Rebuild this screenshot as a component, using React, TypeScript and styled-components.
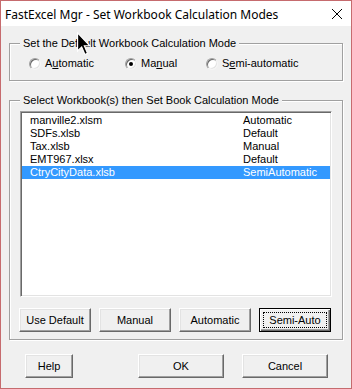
import React from "react";
import styled, { createGlobalStyle } from "styled-components";

const Global = createGlobalStyle`
  html, body { margin: 0; padding: 0; background: #f0f0f0; }
  body { font-family: "Liberation Sans", Arial, sans-serif; font-size: 11px; color: #000; }
  * { box-sizing: border-box; }
`;

const Window = styled.div`
  position: relative;
  width: 352px;
  height: 389px;
  border: 1px solid #c66b6e;
  background: #f0f0f0;
  display: flex;
  flex-direction: column;
  overflow: hidden;
`;

const TitleBar = styled.div`
  height: 25px;
  flex: none;
  background: #fff;
  display: flex;
  align-items: center;
  justify-content: space-between;
  padding: 1px 8px 0 4px;
  font-family: "Noto Sans", "Liberation Sans", sans-serif;
  font-size: 12px;
  color: #000;
`;

const Title = styled.span`
  white-space: nowrap;
`;

const CloseIcon = styled.svg`
  width: 12px;
  height: 12px;
  display: block;
`;

const Body = styled.div`
  padding: 17px 7px 0 8px;
  display: flex;
  flex-direction: column;
`;

const Group = styled.div<{ $mt?: number }>`
  position: relative;
  border: 1px solid #a0a0a0;
  box-shadow: inset 1px 1px 0 #fff, 1px 1px 0 #fff;
  margin-top: ${(p) => p.$mt ?? 0}px;
  margin-right: 1px;
`;

const Legend = styled.span`
  position: absolute;
  top: -7px;
  left: 10px;
  padding: 0 3px;
  height: 13px;
  line-height: 13px;
  background: #f0f0f0;
  white-space: nowrap;
`;

const RadioRow = styled.div`
  display: flex;
  align-items: center;
  height: 13px;
  margin: 13px 0 10px 19px;
`;

const RadioItem = styled.label<{ $w: number }>`
  display: flex;
  align-items: center;
  gap: 4px;
  width: ${(p) => p.$w}px;
  line-height: 13px;
  white-space: nowrap;
`;

const RadioCircle = styled.span<{ $checked?: boolean }>`
  position: relative;
  width: 12px;
  height: 12px;
  border-radius: 50%;
  background: #fff;
  border: 1px solid;
  border-color: #a0a0a0 #f4f4f4 #f4f4f4 #a0a0a0;
  box-shadow: inset 1px 1px 0 #6a6a6a, inset -1px -1px 0 #e3e3e3;
  flex: none;
  &::after {
    content: "";
    display: ${(p) => (p.$checked ? "block" : "none")};
    position: absolute;
    left: 3px;
    top: 3px;
    width: 4px;
    height: 4px;
    border-radius: 50%;
    background: #000;
  }
`;

const Key = styled.span`
  text-decoration: underline;
  text-underline-offset: 1px;
`;

const ListArea = styled.div`
  display: flex;
  flex-direction: column;
  padding: 10px 11px 7px 9px;
`;

const ListBox = styled.div`
  margin-left: 1px;
  width: 312px;
  height: 186px;
  background: #fff;
  border: 1px solid;
  border-color: #a0a0a0 #fff #fff #a0a0a0;
  box-shadow: inset 1px 1px 0 #696969, inset -1px -1px 0 #e3e3e3;
  padding: 2px 1px 1px 1px;
`;

const Row = styled.div<{ $sel?: boolean }>`
  display: grid;
  grid-template-columns: 213px 1fr;
  height: 13px;
  line-height: 13px;
  padding-left: 8px;
  white-space: nowrap;
  background: ${(p) => (p.$sel ? "#3399ff" : "transparent")};
  color: ${(p) => (p.$sel ? "#fff" : "#000")};
`;

const ButtonRow = styled.div<{ $gap: number }>`
  display: flex;
  gap: ${(p) => p.$gap}px;
  margin-top: 11px;
`;

const Button = styled.button<{ $w: number; $default?: boolean }>`
  position: relative;
  width: ${(p) => p.$w}px;
  height: 24px;
  padding: 0;
  background: #f0f0f0;
  font-family: "Liberation Sans", Arial, sans-serif;
  font-size: 11px;
  color: #000;
  border: 1px solid;
  border-color: ${(p) => (p.$default ? "#000" : "#fff #696969 #696969 #fff")};
  box-shadow: ${(p) =>
    p.$default
      ? "inset 1px 1px 0 #fff, inset -1px -1px 0 #696969, inset -2px -2px 0 #a0a0a0"
      : "inset -1px -1px 0 #a0a0a0, inset 1px 1px 0 #e3e3e3"};
  &::after {
    content: "";
    display: ${(p) => (p.$default ? "block" : "none")};
    position: absolute;
    inset: 3px;
    border: 1px dotted #000;
  }
`;

const Footer = styled.div`
  display: flex;
  justify-content: space-between;
  margin-top: 14px;
  padding: 0 16px;
`;

const FooterRight = styled.div`
  display: flex;
  gap: 18px;
`;

const Cursor = styled.svg`
  position: absolute;
  left: 76px;
  top: 31px;
  width: 14px;
  height: 24px;
  overflow: visible;
`;

const rows = [
  { name: "manville2.xlsm", mode: "Automatic" },
  { name: "SDFs.xlsb", mode: "Default" },
  { name: "Tax.xlsb", mode: "Manual" },
  { name: "EMT967.xlsx", mode: "Default" },
  { name: "CtryCityData.xlsb", mode: "SemiAutomatic", sel: true },
];

export default function App() {
  return (
    <>
      <Global />
      <Window>
        <TitleBar>
          <Title>FastExcel Mgr - Set Workbook Calculation Modes</Title>
          <CloseIcon viewBox="0 0 12 12">
            <path d="M1 1 L11 11 M11 1 L1 11" stroke="#000" strokeWidth="1" fill="none" />
          </CloseIcon>
        </TitleBar>
        <Body>
          <Group>
            <Legend>Set the Default Workbook Calculation Mode</Legend>
            <RadioRow>
              <RadioItem $w={96}>
                <RadioCircle />
                <span>
                  A<Key>u</Key>tomatic
                </span>
              </RadioItem>
              <RadioItem $w={81}>
                <RadioCircle $checked />
                <span>
                  Ma<Key>n</Key>ual
                </span>
              </RadioItem>
              <RadioItem $w={120}>
                <RadioCircle />
                <span>
                  S<Key>e</Key>mi-automatic
                </span>
              </RadioItem>
            </RadioRow>
          </Group>
          <Group $mt={19}>
            <Legend>Select Workbook(s) then Set Book Calculation Mode</Legend>
            <ListArea>
              <ListBox>
                {rows.map((r) => (
                  <Row key={r.name} $sel={r.sel}>
                    <span>{r.name}</span>
                    <span>{r.mode}</span>
                  </Row>
                ))}
              </ListBox>
              <ButtonRow $gap={8}>
                <Button $w={72}>Use Default</Button>
                <Button $w={72}>Manual</Button>
                <Button $w={72}>Automatic</Button>
                <Button $w={72} $default>
                  Semi-Auto
                </Button>
              </ButtonRow>
            </ListArea>
          </Group>
          <Footer>
            <Button $w={48}>Help</Button>
            <FooterRight>
              <Button $w={86}>OK</Button>
              <Button $w={86}>Cancel</Button>
            </FooterRight>
          </Footer>
        </Body>
        <Cursor viewBox="0 0 12 20">
          <polygon
            points="0.5,0.5 0.5,16 4,12.5 6.8,19 9,18 6.3,11.5 11,11.5"
            fill="#000"
            stroke="#fff"
            strokeWidth="1"
            strokeLinejoin="miter"
          />
        </Cursor>
      </Window>
    </>
  );
}
